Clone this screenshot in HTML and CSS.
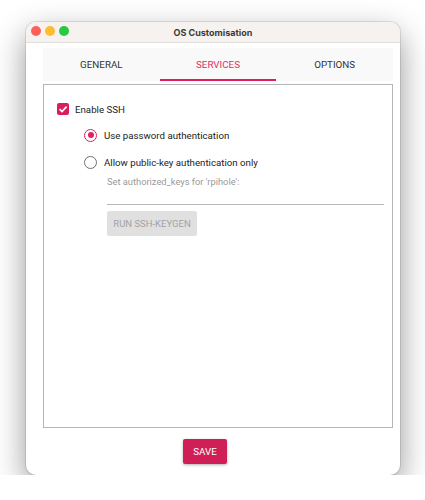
FILE: index.html
```html
<!DOCTYPE html>
<html lang="en">
<head>
    <meta charset="UTF-8" />
    <meta name="viewport" content="width=device-width, initial-scale=1" />
    <title>OS Customisation</title>
    <link rel="stylesheet" href="styles.css">
</head>
<body>

<div class="window">
    <div class="titlebar">
        <div class="lights">
            <span class="light red"></span>
            <span class="light yellow"></span>
            <span class="light green"></span>
        </div>
        <div class="title">OS Customisation</div>
    </div>

    <div class="window-body">
        <nav class="tabs">
            <div class="tab">GENERAL</div>
            <div class="tab active">SERVICES</div>
            <div class="tab">OPTIONS</div>
        </nav>

        <section class="panel">
            <label class="check-row">
                <span class="checkbox">
                    <svg width="10" height="10" viewBox="0 0 10 10"><path d="M1.6 5.2 L4 7.5 L8.6 2.6" fill="none" stroke="#fff" stroke-width="1.6"/></svg>
                </span>
                Enable SSH
            </label>

            <div class="options">
                <label class="radio-row">
                    <span class="radio checked"></span>
                    Use password authentication
                </label>
                <label class="radio-row">
                    <span class="radio"></span>
                    Allow public-key authentication only
                </label>

                <div class="keys">
                    <div class="hint">Set authorized_keys for 'rpihole':</div>
                    <div class="keys-input"></div>
                    <button class="keygen" disabled>RUN SSH-KEYGEN</button>
                </div>
            </div>
        </section>

        <div class="footer">
            <button class="save">SAVE</button>
        </div>
    </div>
</div>

</body>
</html>
```

FILE: styles.css
```css
body {
    margin: 0;
    background: #fff;
    font-family: Roboto, "Liberation Sans", sans-serif;
    color: #222;
}

.window {
    margin: 22px 0 0 26px;
    width: 374px;
    height: 453px;
    background: #fff;
    border-radius: 10px;
    box-shadow: 0 12px 32px rgba(0,0,0,0.42), 0 0 0 1px rgba(0,0,0,0.1);
    overflow: hidden;
    display: flex;
    flex-direction: column;
}

.titlebar {
    height: 20px;
    background: #f6f2f0;
    border-bottom: 1px solid #e2dedb;
    position: relative;
    display: flex;
    align-items: center;
    justify-content: center;
}

.lights {
    position: absolute;
    left: 5px;
    top: 4px;
    display: flex;
    gap: 4px;
}

.light {
    width: 10px;
    height: 10px;
    border-radius: 50%;
}

.light.red { background: #fe5f57; }
.light.yellow { background: #febc2e; }
.light.green { background: #28c840; }

.title {
    font-family: Inter, "Liberation Sans", sans-serif;
    font-weight: 700;
    font-size: 9px;
    color: #3a3a3a;
}

.window-body {
    flex: 1;
    padding: 5px 7px 0 17px;
    display: flex;
    flex-direction: column;
}

.tabs {
    display: flex;
    height: 33px;
    background: #f9f9f9;
}

.tab {
    flex: 1;
    display: flex;
    align-items: center;
    justify-content: center;
    font-size: 9.8px;
    color: #333;
    border-bottom: 2px solid transparent;
    padding-top: 2px;
}

.tab.active {
    color: #e22f69;
    border-bottom-color: #dc1f5a;
}

.panel {
    margin-top: 3px;
    height: 344px;
    border: 1px solid #b5b5b5;
    padding: 18px 8px 0 13px;
    box-sizing: border-box;
    font-size: 9.7px;
}

.check-row,
.radio-row {
    display: flex;
    align-items: center;
}

.check-row {
    height: 12px;
    gap: 6px;
}

.checkbox {
    width: 12px;
    height: 12px;
    border-radius: 2px;
    background: #d81f5c;
    display: flex;
    align-items: center;
    justify-content: center;
}

.options {
    padding-left: 27px;
    margin-top: 6.5px;
    display: flex;
    flex-direction: column;
}

.radio-row {
    height: 27px;
    gap: 7px;
}

.radio {
    width: 13px;
    height: 13px;
    box-sizing: border-box;
    border: 1.6px solid #6f6f6f;
    border-radius: 50%;
    display: flex;
    align-items: center;
    justify-content: center;
}

.radio.checked {
    border-color: #e0225f;
}

.radio.checked::after {
    content: "";
    width: 6px;
    height: 6px;
    border-radius: 50%;
    background: #e0225f;
}

.keys {
    padding-left: 23px;
}

.hint {
    font-size: 9.3px;
    line-height: 11px;
    color: #9a9a9a;
}

.keys-input {
    margin-top: 17px;
    border-bottom: 1px solid #b8b8b8;
}

.keygen {
    margin-top: 6px;
    width: 90px;
    height: 25px;
    border: none;
    border-radius: 2px;
    background: #e0e0e0;
    color: #a3a3a3;
    font-family: inherit;
    font-size: 9.5px;
    padding: 0;
}

.footer {
    display: flex;
    justify-content: center;
    padding-top: 11px;
    padding-right: 26px;
}

.save {
    width: 44px;
    height: 25px;
    border: none;
    border-radius: 2px;
    background: #d01f57;
    color: #fff;
    font-family: inherit;
    font-size: 9.8px;
    padding: 0;
    box-shadow: 0 1px 3px rgba(0,0,0,0.3);
}
```
